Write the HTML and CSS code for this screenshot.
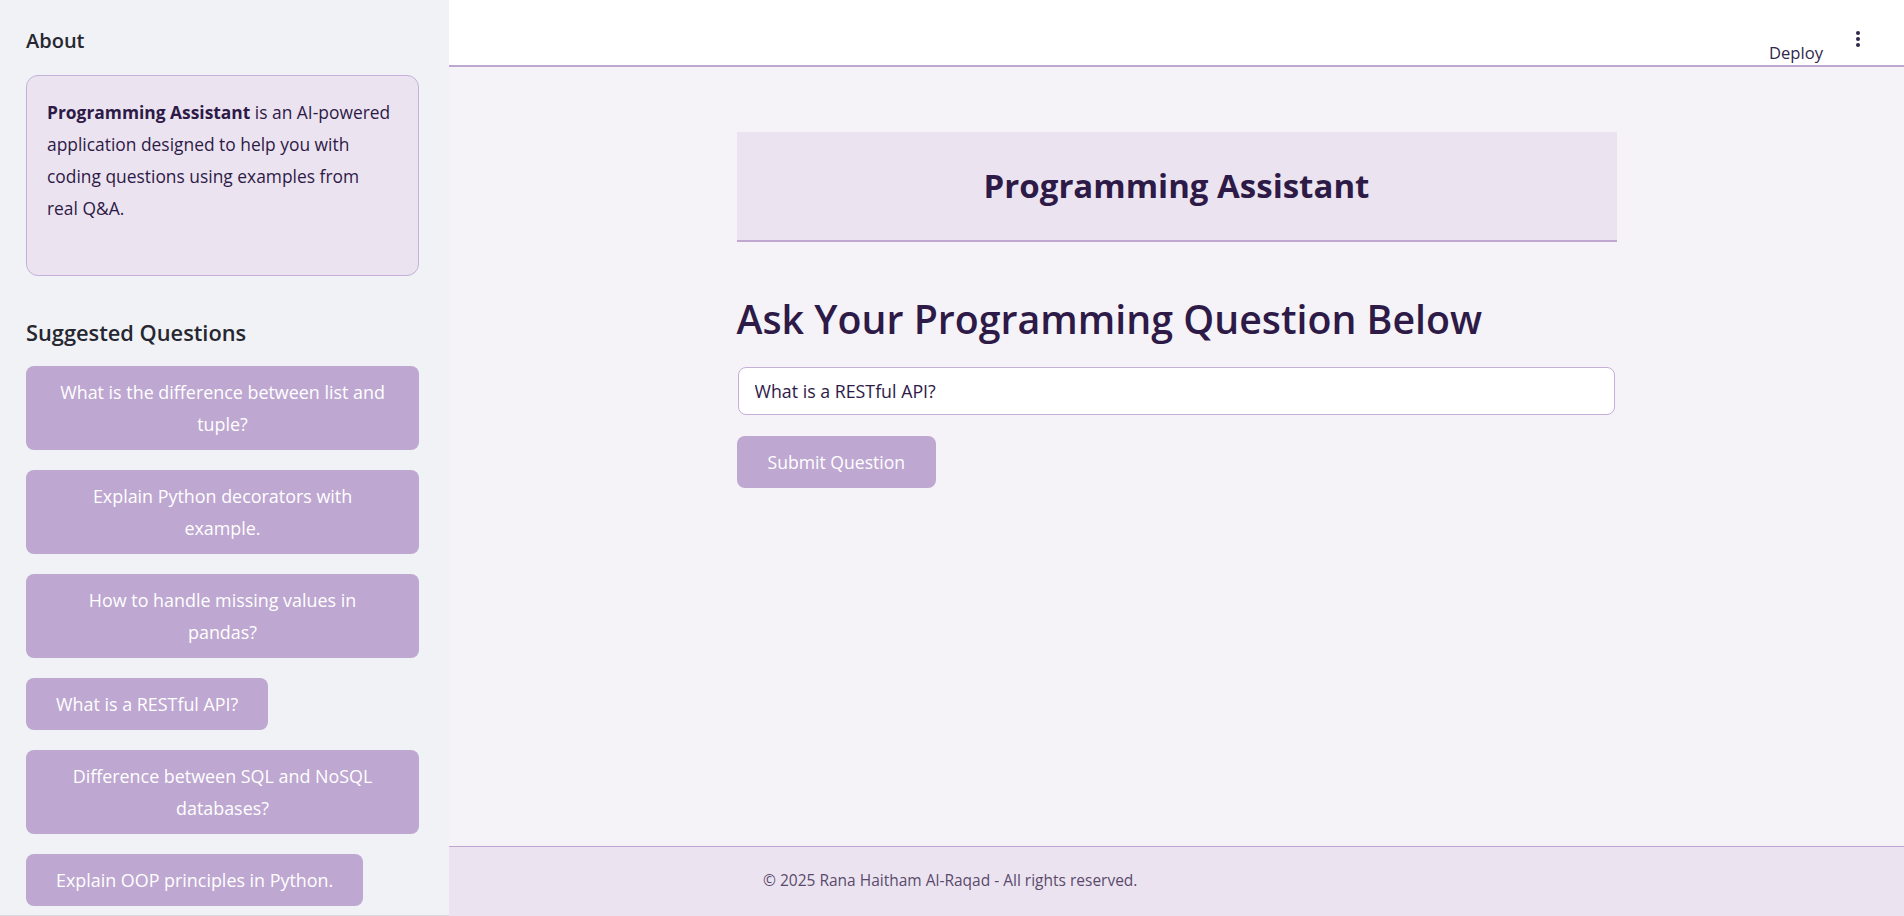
FILE: index.html
```html
<!DOCTYPE html>
<html lang="en">
<head>
<meta charset="utf-8">
<title>Programming Assistant</title>
<link rel="stylesheet" href="styles.css">
</head>
<body>
<div class="app">
  <aside class="sidebar">
    <h3 class="side-title about">About</h3>
    <div class="about-box">
      <p><strong>Programming Assistant</strong> is an AI-powered<br>application designed to help you with<br>coding questions using examples from<br>real Q&amp;A.</p>
    </div>
    <h3 class="side-title suggested">Suggested Questions</h3>
    <div class="questions">
      <button class="q-btn wide">What is the difference between list and<br>tuple?</button>
      <button class="q-btn wide">Explain Python decorators with<br>example.</button>
      <button class="q-btn wide">How to handle missing values in<br>pandas?</button>
      <button class="q-btn">What is a RESTful API?</button>
      <button class="q-btn wide">Difference between SQL and NoSQL<br>databases?</button>
      <button class="q-btn">Explain OOP principles in Python.</button>
    </div>
  </aside>
  <div class="main">
    <header class="topbar">
      <span class="deploy">Deploy</span>
      <span class="menu" aria-label="menu"><i></i><i></i><i></i></span>
    </header>
    <section class="content">
      <div class="container">
        <div class="title-box"><h2>Programming Assistant</h2></div>
        <h1 class="ask">Ask Your Programming Question Below</h1>
        <div class="input-wrap"><input class="q-input" type="text" value="What is a RESTful API?"></div>
        <button class="submit">Submit Question</button>
      </div>
    </section>
    <footer class="footer">© 2025 Rana Haitham Al-Raqad - All rights reserved.</footer>
  </div>
</div>
</body>
</html>
```

FILE: styles.css
```css
* { box-sizing: border-box; }
html, body { margin: 0; padding: 0; }
body {
  font-family: "Open Sans", "Liberation Sans", sans-serif;
  color: #2e1a47;
  width: 1904px;
  height: 916px;
  overflow: hidden;
}
.app { display: flex; height: 916px; }

.sidebar {
  width: 449px;
  flex: none;
  background: #f0f2f6;
  padding: 28px 30px 0 26px;
  border-bottom: 1px solid #d9dadf;
  overflow: hidden;
}
.side-title {
  margin: 0;
  font-size: 21.8px;
  line-height: 25px;
  font-weight: 600;
  color: #262730;
}
.side-title.about { font-size: 20px; }
.about-box {
  margin-top: 22px;
  background: #ebe4f0;
  border: 1px solid #c4b0d8;
  border-radius: 12px;
  padding: 20px 20px 51px 20px;
  height: 201px;
}
.about-box p {
  margin: 0;
  font-size: 17.4px;
  line-height: 32px;
  color: #2e1a47;
}
.about-box strong { font-weight: 700; }
.suggested { margin-top: 44px; }
.questions {
  margin-top: 21px;
  display: flex;
  flex-direction: column;
  align-items: flex-start;
  gap: 20px;
}
.q-btn {
  font-family: inherit;
  font-size: 17.9px;
  line-height: 32px;
  color: #ffffff;
  background: #bea7d1;
  border: none;
  border-radius: 8px;
  padding: 10px 30px;
  text-align: center;
  width: fit-content;
  max-width: 100%;
}
.q-btn.wide { width: 100%; }

.main {
  flex: 1;
  display: flex;
  flex-direction: column;
  background: #f5f3f8;
}
.topbar {
  height: 67px;
  flex: none;
  background: #ffffff;
  border-bottom: 2px solid #bea7d1;
  display: flex;
  align-items: flex-end;
  justify-content: flex-end;
  padding-right: 44px;
}
.deploy {
  font-size: 16.6px;
  line-height: 20px;
  color: #31284a;
  margin-bottom: 2px;
  margin-right: 33px;
}
.menu {
  display: flex;
  flex-direction: column;
  gap: 2px;
  margin-bottom: 18px;
}
.menu i {
  display: block;
  width: 4px;
  height: 4px;
  border-radius: 50%;
  background: #31284a;
}
.content {
  flex: 1;
  display: flex;
  justify-content: center;
}
.container {
  width: 880px;
  padding-top: 65px;
}
.title-box {
  height: 110px;
  background: #ebe4f0;
  border-bottom: 2px solid #bea7d1;
  display: flex;
  align-items: center;
  justify-content: center;
}
.title-box h2 {
  margin: 0;
  font-size: 33px;
  font-weight: 700;
  line-height: 40px;
  color: #2e1a47;
}
.ask {
  margin: 54px 0 0 0;
  font-size: 39.3px;
  line-height: 47px;
  font-weight: 600;
  color: #2e1a47;
}
.input-wrap { margin-top: 24px; padding: 0 2px 0 1px; }
.q-input {
  display: block;
  width: 100%;
  height: 48px;
  border: 1px solid #c4b0d8;
  border-radius: 8px;
  background: #ffffff;
  padding: 0 16px;
  font-family: inherit;
  font-size: 17.8px;
  color: #2e1a47;
  outline: none;
}
.submit {
  margin-top: 21px;
  font-family: inherit;
  font-size: 17.6px;
  line-height: 32px;
  color: #ffffff;
  background: #bea7d1;
  border: none;
  border-radius: 8px;
  padding: 10px 31px;
}
.footer {
  height: 70px;
  flex: none;
  background: #ebe4f0;
  border-top: 1px solid #bea7d1;
  padding-left: 314px;
  padding-bottom: 4px;
  display: flex;
  align-items: center;
  font-size: 15.5px;
  color: #5a4a6c;
}
```
